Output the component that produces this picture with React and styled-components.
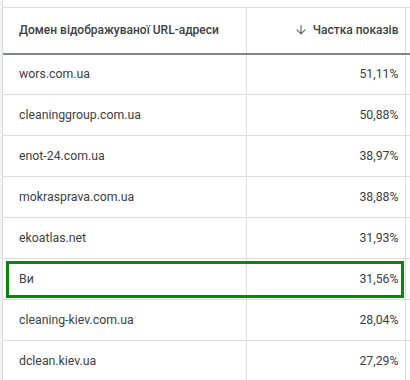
import styled, { createGlobalStyle } from 'styled-components';

const GlobalStyle = createGlobalStyle`
  html, body {
    margin: 0;
    padding: 0;
    background: #ffffff;
    font-family: Roboto, "Liberation Sans", Arial, sans-serif;
  }
`;

const Page = styled.div`
  width: 410px;
  height: 380px;
  overflow: hidden;
  display: flex;
  padding-top: 7px;
  box-sizing: border-box;
`;

const Gutter = styled.div`
  width: 2px;
  background: #f1f3f4;
  border-right: 1px solid #dadce0;
  margin-top: -7px;
  flex-shrink: 0;
`;

const Table = styled.table`
  flex: 1;
  border-collapse: collapse;
  table-layout: fixed;
  height: fit-content;
`;

const HeadCell = styled.th`
  height: 46px;
  padding: 0 ${(p) => (p.$right ? '6px' : '16px')} 0 16px;
  border-top: 1px solid #dadce0;
  border-bottom: 2px solid #80868b;
  border-right: 1px solid #dadce0;
  font-size: 12px;
  font-weight: 500;
  color: #3c4043;
  text-align: ${(p) => (p.$right ? 'right' : 'left')};
  white-space: nowrap;
  box-sizing: border-box;
`;

const SortArrow = styled.svg`
  width: 14px;
  height: 14px;
  vertical-align: -3px;
  margin-right: 5px;
`;

const Row = styled.tr`
  ${(p) =>
    p.$highlight &&
    `
    td:first-child::before {
      content: '';
      position: absolute;
      left: 3px;
      top: 2px;
      width: 398px;
      height: 37px;
      border: 3px solid #0a870a;
      box-sizing: border-box;
      pointer-events: none;
    }
  `}
`;

const Cell = styled.td`
  position: relative;
  height: 41px;
  padding: 0 ${(p) => (p.$right ? '6px' : '16px')} 0 16px;
  border-bottom: 1px solid #dadce0;
  border-right: 1px solid #dadce0;
  font-size: 12.3px;
  color: #3c4043;
  text-align: ${(p) => (p.$right ? 'right' : 'left')};
  white-space: nowrap;
  box-sizing: border-box;
`;

const Spacer = styled.th`
  border-top: 1px solid #dadce0;
  border-bottom: 2px solid #80868b;
`;

const SpacerCell = styled.td`
  border-bottom: 1px solid #dadce0;
`;

const rows = [
  { domain: 'wors.com.ua', share: '51,11%' },
  { domain: 'cleaninggroup.com.ua', share: '50,88%' },
  { domain: 'enot-24.com.ua', share: '38,97%' },
  { domain: 'mokrasprava.com.ua', share: '38,88%' },
  { domain: 'ekoatlas.net', share: '31,93%' },
  { domain: 'Ви', share: '31,56%', you: true },
  { domain: 'cleaning-kiev.com.ua', share: '28,04%' },
  { domain: 'dclean.kiev.ua', share: '27,29%' },
];

function App() {
  return (
    <>
      <GlobalStyle />
      <Page>
        <Gutter />
        <Table>
          <colgroup>
            <col style={{ width: '243px' }} />
            <col style={{ width: '159px' }} />
            <col style={{ width: '5px' }} />
          </colgroup>
          <thead>
            <tr>
              <HeadCell>Домен відображуваної URL-адреси</HeadCell>
              <HeadCell $right>
                <SortArrow viewBox="0 0 24 24">
                  <path d="M20 12l-1.41-1.41L13 16.17V4h-2v12.17l-5.58-5.59L4 12l8 8 8-8z" fill="#5f6368" />
                </SortArrow>
                Частка показів
              </HeadCell>
              <Spacer />
            </tr>
          </thead>
          <tbody>
            {rows.map((r) => (
              <Row key={r.domain} $highlight={r.you}>
                <Cell>{r.domain}</Cell>
                <Cell $right>{r.share}</Cell>
                <SpacerCell />
              </Row>
            ))}
          </tbody>
        </Table>
      </Page>
    </>
  );
}

export default App;
